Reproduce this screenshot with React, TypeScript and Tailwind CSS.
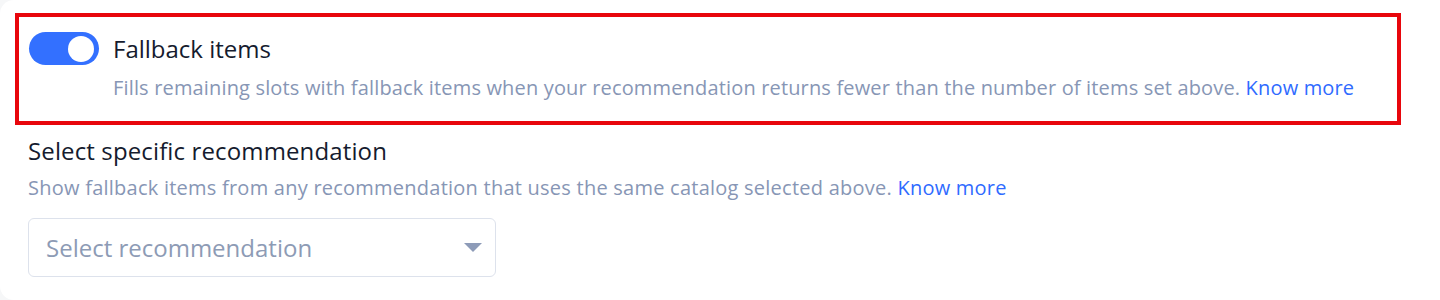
const Toggle = () => (
    <div className="w-[70px] h-[33px] rounded-full bg-[#3370ff] flex items-center justify-end px-[5px] shrink-0">
        <div className="w-[26px] h-[26px] rounded-full bg-white" />
    </div>
);

const Caret = () => (
    <svg width="18" height="9" viewBox="0 0 18 9" className="shrink-0">
        <path d="M0 0 H18 L9 9 Z" fill="#8d9bb8" />
    </svg>
);

export default function App() {
    return (
        <div className="w-full h-[300px] bg-[#f6f7f8] font-['Open_Sans',sans-serif] overflow-hidden">
            <div className="h-full bg-white rounded-tl-[14px] rounded-bl-[14px] pt-[13px] pl-[15px]">
                <div className="w-[1386px] border-[4px] border-[#e8060c] pl-[10px] pt-[15px] pb-[20px] flex items-start gap-[14px]">
                    <Toggle />
                    <div className="flex flex-col mt-[2px]">
                        <div className="text-[24px] leading-[30px] text-[#151b2e]">Fallback items</div>
                        <div className="mt-[11px] text-[20px] leading-[26px] tracking-[0.16px] text-[#8796b5]">
                            Fills remaining slots with fallback items when your recommendation returns fewer than the number of items set above.{" "}
                            <a className="text-[#2f6bff]">Know more</a>
                        </div>
                    </div>
                </div>
                <div className="pl-[13px] pt-[11px]">
                    <div className="text-[24px] leading-[30px] tracking-[0.13px] text-[#151b2e]">Select specific recommendation</div>
                    <div className="mt-[9px] text-[20px] leading-[26px] tracking-[0.24px] text-[#8796b5]">
                        Show fallback items from any recommendation that uses the same catalog selected above.{" "}
                        <a className="text-[#2f6bff]">Know more</a>
                    </div>
                    <div className="mt-[17px] w-[468px] h-[59px] border border-[#dde2ec] rounded-[6px] flex items-center justify-between pl-[17px] pr-[13px]">
                        <span className="text-[24px] leading-[30px] text-[#8d9bb5]">Select recommendation</span>
                        <Caret />
                    </div>
                </div>
            </div>
        </div>
    );
}
